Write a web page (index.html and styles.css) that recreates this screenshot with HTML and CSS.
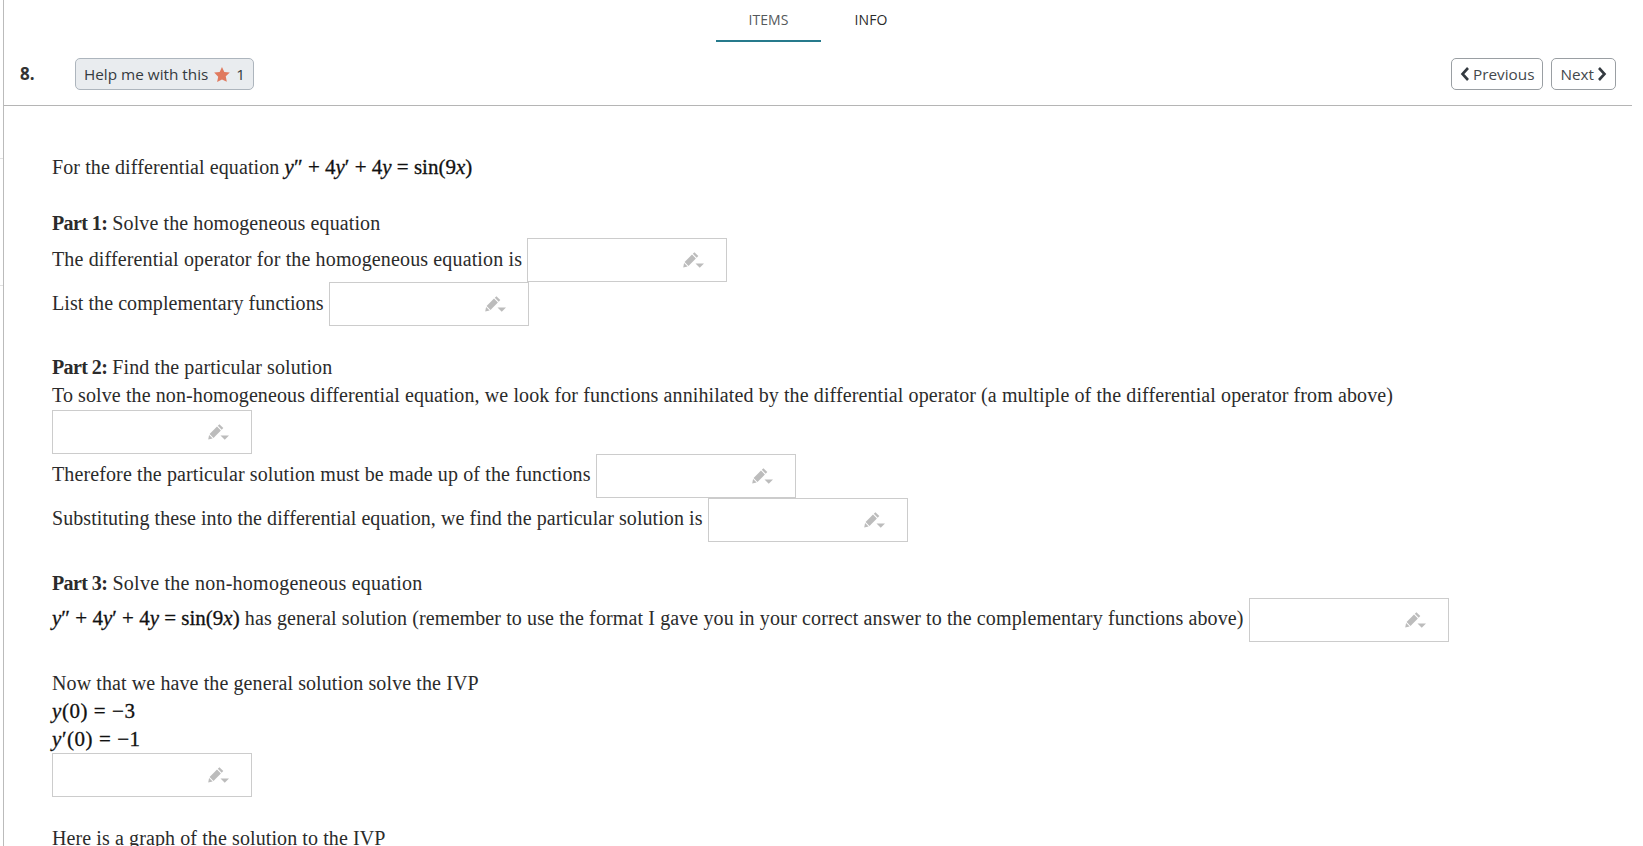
FILE: index.html
```html
<!DOCTYPE html>
<html lang="en">
<head>
<meta charset="utf-8">
<title>Item 8</title>
<link rel="stylesheet" href="styles.css">
</head>
<body>
<span class="tick tick-a"></span>
<span class="tick tick-b"></span>
<div class="page">
  <nav class="tabs">
    <a class="tab tab-items">ITEMS</a>
    <a class="tab tab-info">INFO</a>
  </nav>
  <header class="item-head">
    <strong class="item-no">8.</strong>
    <button class="btn btn-help"><span>Help me with this</span>
      <svg class="star" viewBox="1 1.5 22 21" width="18" height="17"><path d="M12 1.5l3.2 6.9 7.6.9-5.6 5.2 1.5 7.5L12 18.8l-6.7 3.7 1.5-7.5L1.2 9.3l7.6-.9z"/></svg>
      <span>1</span>
    </button>
    <div class="pager">
      <button class="btn btn-nav"><svg class="chev" viewBox="0 0 10 16" width="10" height="16"><path d="M8 2L2.5 8 8 14"/></svg>Previous</button>
      <button class="btn btn-nav">Next<svg class="chev" viewBox="0 0 10 16" width="10" height="16"><path d="M2 2l5.5 6L2 14"/></svg></button>
    </div>
  </header>
  <main class="content">
    <p class="line intro">For the differential equation <span class="math"><i>y</i>″ + 4<i>y</i>′ + 4<i>y</i> = sin(9<i>x</i>)</span></p>

    <p class="line part part-1"><b>Part 1:</b> Solve the homogeneous equation</p>
    <div class="row"><span class="label label-op">The differential operator for the homogeneous equation is</span>
      <span class="answer"><svg class="pencil" viewBox="0 0 21 16" width="21" height="16"><use href="#pen"/></svg></span></div>
    <div class="row"><span class="label label-list">List the complementary functions</span>
      <span class="answer"><svg class="pencil" viewBox="0 0 21 16" width="21" height="16"><use href="#pen"/></svg></span></div>

    <p class="line part part-2"><b>Part 2:</b> Find the particular solution</p>
    <p class="line lead">To solve the non-homogeneous differential equation, we look for functions annihilated by the differential operator (a multiple of the differential operator from above)</p>
    <div class="row"><span class="answer"><svg class="pencil" viewBox="0 0 21 16" width="21" height="16"><use href="#pen"/></svg></span></div>
    <div class="row"><span class="label label-there">Therefore the particular solution must be made up of the functions</span>
      <span class="answer"><svg class="pencil" viewBox="0 0 21 16" width="21" height="16"><use href="#pen"/></svg></span></div>
    <div class="row"><span class="label label-sub">Substituting these into the differential equation, we find the particular solution is</span>
      <span class="answer"><svg class="pencil" viewBox="0 0 21 16" width="21" height="16"><use href="#pen"/></svg></span></div>

    <p class="line part part-3"><b>Part 3:</b> Solve the non-homogeneous equation</p>
    <div class="row"><span class="label label-math"><span class="math"><i>y</i>″ + 4<i>y</i>′ + 4<i>y</i> = sin(9<i>x</i>)</span> has general solution (remember to use the format I gave you in your correct answer to the complementary functions above)</span>
      <span class="answer"><svg class="pencil" viewBox="0 0 21 16" width="21" height="16"><use href="#pen"/></svg></span></div>

    <p class="line part part-4">Now that we have the general solution solve the IVP</p>
    <p class="line"><span class="math math-ivp"><i>y</i>(0) = −3</span></p>
    <p class="line"><span class="math math-ivp"><i>y</i>′(0) = −1</span></p>
    <div class="row"><span class="answer"><svg class="pencil" viewBox="0 0 21 16" width="21" height="16"><use href="#pen"/></svg></span></div>

    <p class="line part part-5">Here is a graph of the solution to the IVP</p>
  </main>
</div>
<svg class="defs" width="0" height="0">
  <defs>
    <g id="pen">
      <path d="M11.4.2l3.9 3.9-1.6 1.6-3.9-3.9z"/>
      <path d="M9 2.6l3.9 3.9-7.4 7.4-3.9-3.9z"/>
      <path d="M1.1 10.9l3.5 3.5-4.4 1.2z"/>
      <path d="M12.5 11.4h8.5l-4.25 4.4z"/>
    </g>
  </defs>
</svg>
</body>
</html>
```
FILE: styles.css
```css
html, body {
  margin: 0;
  padding: 0;
  height: 846px;
  overflow: hidden;
  background: #fff;
}

body {
  position: relative;
  font-family: "Open Sans", "Liberation Sans", sans-serif;
  color: #333;
}

.tick {
  position: absolute;
  left: 0;
  width: 3px;
  height: 1px;
  background: #e2e2e2;
}
.tick-a { top: 158px; }
.tick-b { top: 285px; }

.page {
  margin-left: 3px;
  border-left: 1px solid #bbb;
  height: 846px;
  box-sizing: border-box;
}

.tabs {
  display: flex;
  justify-content: center;
  height: 42px;
  padding-right: 10px;
}

.tab {
  display: flex;
  justify-content: center;
  box-sizing: border-box;
  padding-top: 10px;
  font-size: 14px;
  letter-spacing: 0.1px;
  line-height: 19px;
  color: #2b2b2b;
}
.tab-items {
  width: 105px;
  color: #55595c;
  border-bottom: 2px solid #267a8c;
}
.tab-info { width: 100px; }

.item-head {
  display: flex;
  align-items: center;
  height: 64px;
  box-sizing: border-box;
  margin-right: 11px;
  padding: 16px 16px 15px 16px;
  border-bottom: 1px solid #b5b5b5;
}

.item-no {
  width: 55px;
  padding-bottom: 2px;
  font-size: 17px;
  font-weight: 700;
  color: #333;
}

.btn {
  display: inline-flex;
  align-items: center;
  height: 32px;
  box-sizing: border-box;
  border-radius: 5px;
  border: 1px solid #9a9fa3;
  background: #fff;
  font-family: inherit;
  font-size: 15.3px;
  color: #44484c;
  padding: 0 8px;
  white-space: nowrap;
}

.btn-help {
  width: 179px;
  gap: 6px;
  background: #e9ecef;
  border-color: #adb5bd;
  color: #343a40;
}

.star { fill: #e07a5f; }

.pager {
  display: flex;
  gap: 8px;
  margin-left: auto;
}

.btn-nav { gap: 3px; }

.chev {
  fill: none;
  stroke: #343a40;
  stroke-width: 2.6;
}

.content {
  padding: 0 0 0 48px;
  font-family: "Liberation Serif", serif;
  font-size: 20px;
  letter-spacing: 0.1px;
  color: #2b2b2b;
  line-height: 28px;
}

.line {
  margin: 0;
  white-space: nowrap;
}

b { letter-spacing: -0.6px; }

.intro { margin-top: 47px; }
.part-1 { margin-top: 28px; margin-bottom: 1px; }
.part-2 { margin-top: 27px; }
.lead { margin-bottom: 1px; }
.part-3 { margin-top: 27px; margin-bottom: 1px; letter-spacing: 0.25px; }
.part-4 { margin-top: 27px; }
.part-5 { margin-top: 27px; }

.row {
  display: flex;
  align-items: center;
  gap: 5px;
  height: 44px;
  white-space: nowrap;
}

.label { padding-bottom: 2px; }
.label-op { letter-spacing: 0.137px; }
.label-list { letter-spacing: 0.07px; }
.label-there { padding-bottom: 4px; letter-spacing: 0.116px; }
.label-sub { padding-bottom: 4px; letter-spacing: 0.064px; }
.label-math { padding-bottom: 5px; letter-spacing: 0.118px; }

.answer {
  display: flex;
  align-items: center;
  justify-content: flex-end;
  width: 200px;
  height: 44px;
  box-sizing: border-box;
  padding-right: 22px;
  border: 1px solid #ccc;
  background: #fff;
}

.pencil { fill: #bcbcbc; }

.math {
  font-family: "Liberation Serif", serif;
  font-size: 21px;
  letter-spacing: 0;
  color: #111;
  -webkit-text-stroke: 0.3px #111;
}

.math-ivp { letter-spacing: 0.55px; }

.defs { position: absolute; }
```
